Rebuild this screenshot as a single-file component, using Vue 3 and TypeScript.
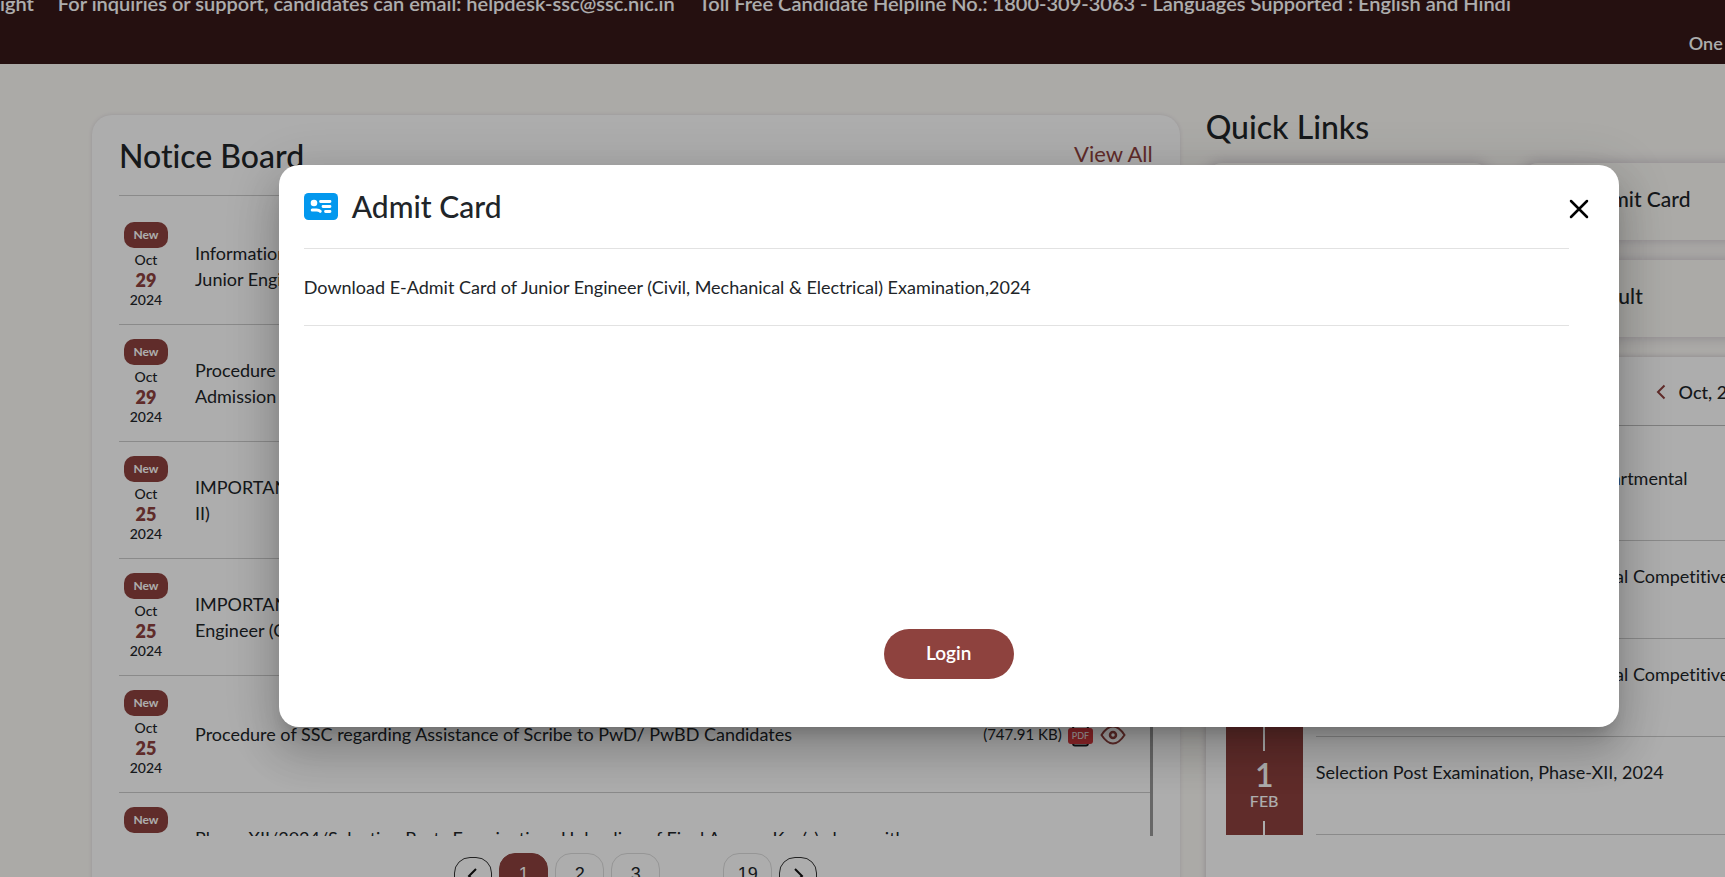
<script setup lang="ts">
interface Notice {
  month: string
  day: string
  year: string
  lines: string[]
  size?: string
}

interface ExamDate {
  day: string
  month: string
  title: string
}

const notices: Notice[] = [
  { month: 'Oct', day: '29', year: '2024', lines: ['Information', 'Junior Engineer'] },
  { month: 'Oct', day: '29', year: '2024', lines: ['Procedure for', 'Admission'] },
  { month: 'Oct', day: '25', year: '2024', lines: ['IMPORTANT', 'II)'] },
  { month: 'Oct', day: '25', year: '2024', lines: ['IMPORTANT', 'Engineer (Civil)'] },
  {
    month: 'Oct',
    day: '25',
    year: '2024',
    lines: ['Procedure of SSC regarding Assistance of Scribe to PwD/ PwBD Candidates'],
    size: '(747.91 KB)',
  },
  {
    month: 'Oct',
    day: '25',
    year: '2024',
    lines: ['Phase-XII/2024/Selection Posts Examination- Uploading of Final Answer Key(s) along with', 'Question Paper(s)'],
  },
]

const examDates: ExamDate[] = [
  { day: '1', month: 'FEB', title: 'Grade ‘C’ Stenographers, Limited Departmental' },
  { day: '1', month: 'FEB', title: 'SSA/ UDC Grade Limited Departmental Competitive' },
  { day: '1', month: 'FEB', title: 'SSA/ UDC Grade Limited Departmental Competitive' },
  { day: '1', month: 'FEB', title: 'Selection Post Examination, Phase-XII, 2024' },
]
</script>

<template>
  <div class="viewport">
    <div class="page">
      <header class="top">
        <div class="ticker">
          <span>ight</span>
          <span>For inquiries or support, candidates can email: helpdesk-ssc@ssc.nic.in</span>
          <span>Toll Free Candidate Helpline No.: 1800-309-3063 - Languages Supported : English and Hindi</span>
        </div>
        <div class="ticker second">One</div>
      </header>

      <main class="main">
        <section class="board">
          <div class="board-head">
            <h2>Notice Board</h2>
            <a href="#" class="view-all">View All</a>
          </div>
          <ul class="list">
            <li v-for="(n, i) in notices" :key="i" class="notice">
              <div class="date">
                <span class="badge">New</span>
                <span>{{ n.month }}</span>
                <strong>{{ n.day }}</strong>
                <span>{{ n.year }}</span>
              </div>
              <div class="notice-text">
                <div v-for="line in n.lines" :key="line">{{ line }}</div>
              </div>
              <div v-if="n.size" class="file">
                <span>{{ n.size }}</span>
                <svg width="26" height="26" viewBox="0 0 26 26">
                  <path d="M5 10V7Q5 5 7 5H18Q20 5 20 7V10M5 20V22.500Q5 24.500 7 24.500H18Q20 24.500 20 22.500V20" fill="none" stroke="#16181c" stroke-width="1.800" />
                  <rect x="0" y="7" width="25" height="16" rx="3" fill="#d63a3e" />
                  <text x="12.500" y="18" text-anchor="middle" class="pdf">PDF</text>
                </svg>
                <svg width="26" height="26" viewBox="0 0 26 26" fill="none" stroke="#8e423e" stroke-width="2">
                  <path d="M1.500 14Q7 5.500 13 5.500T24.500 14Q19 22.500 13 22.500T1.500 14Z" />
                  <circle cx="13" cy="14" r="3" stroke-width="2.500" />
                </svg>
              </div>
            </li>
          </ul>
          <nav class="pages">
            <button class="arrow" aria-label="Previous">
              <svg width="20" height="20" viewBox="0 0 20 20"><path d="M13 3L6 10L13 17" /></svg>
            </button>
            <button class="num active">1</button>
            <button class="num">2</button>
            <button class="num">3</button>
            <span class="gap"></span>
            <button class="num">19</button>
            <button class="arrow" aria-label="Next">
              <svg width="20" height="20" viewBox="0 0 20 20"><path d="M7 3L14 10L7 17" /></svg>
            </button>
          </nav>
        </section>

        <aside class="side">
          <h2>Quick Links</h2>
          <div class="links">
            <a href="#" class="link" aria-label="Apply"></a>
            <a href="#" class="link">Admit Card</a>
            <a href="#" class="link" aria-label="Answer key"></a>
            <a href="#" class="link">Result</a>
          </div>
          <section class="calendar">
            <div class="cal-head">
              <button class="prev" aria-label="Previous month">
                <svg width="12" height="16" viewBox="0 0 12 16"><path d="M9.500 1.500L3 8L9.500 14.500" /></svg>
              </button>
              <span>Oct, 2024</span>
            </div>
            <ul class="exams">
              <li v-for="(e, i) in examDates" :key="i" class="exam">
                <div class="exam-date">
                  <i></i>
                  <b>{{ e.day }}</b>
                  <span>{{ e.month }}</span>
                  <i></i>
                </div>
                <div class="exam-title">{{ e.title }}</div>
              </li>
            </ul>
          </section>
        </aside>
      </main>

      <div class="backdrop">
        <div class="modal" role="dialog" aria-labelledby="modal-title">
          <div class="modal-head">
            <svg width="34" height="27" viewBox="0 0 34 27">
              <rect width="34" height="27" rx="4.500" fill="#0398ee" />
              <circle cx="10" cy="10" r="3.300" fill="#fff" />
              <path d="M8.200 17H12.500Q15 17 16.200 18.300" fill="none" stroke="#fff" stroke-width="3" stroke-linecap="round" />
              <path d="M16.500 8.500H26M19 13.500H26M21.500 18.500H26" stroke="#fff" stroke-width="2.800" stroke-linecap="round" />
            </svg>
            <h1 id="modal-title">Admit Card</h1>
            <button class="close" aria-label="Close">
              <svg width="20" height="20" viewBox="0 0 20 20"><path d="M2 2L18 18M18 2L2 18" stroke-width="2.500" /></svg>
            </button>
          </div>
          <p class="entry">Download E-Admit Card of Junior Engineer (Civil, Mechanical &amp; Electrical) Examination,2024</p>
          <div class="actions">
            <button class="login">Login</button>
          </div>
        </div>
      </div>
    </div>
  </div>
</template>

<style>
body {
  margin: 0;
  background: #fdfbf7;
}
</style>

<style scoped>
* {
  box-sizing: border-box;
}
.viewport {
  height: 100vh;
  overflow: hidden;
  font-family: Lato, "Open Sans", sans-serif;
  font-size: 18px;
  line-height: 26px;
  font-variant-ligatures: none;
  color: #212529;
}
.page {
  position: relative;
  width: 110vw;
  height: 100%;
  overflow: hidden;
}
h1,
h2,
p,
ul {
  margin: 0;
  padding: 0;
  list-style: none;
}
button {
  font: inherit;
  padding: 0;
  cursor: pointer;
}
.top {
  height: 64px;
  overflow: hidden;
  background: #371918;
  color: #fff;
  font-weight: 600;
  display: flex;
  flex-direction: column;
  justify-content: flex-end;
  gap: 14px;
  padding-bottom: 8px;
}
.ticker {
  display: flex;
  flex-shrink: 0;
  gap: 24px;
  font-size: 20px;
  white-space: nowrap;
}
.second {
  padding-left: 89%;
  font-size: 18px;
}
.main {
  display: grid;
  grid-template-columns: 1088fr 600fr;
  gap: 26px;
  padding: 0 92px;
}
h2 {
  font-size: 32px;
  line-height: 38px;
  font-weight: 500;
}
.board {
  margin-top: 51px;
  padding: 22px 27px 24px;
  background: #fff;
  border-radius: 20px;
  box-shadow: 0 0 4px rgba(60, 50, 100, 0.15);
}
.board-head {
  display: flex;
  justify-content: space-between;
  height: 59px;
  border-bottom: 1px solid #ccc;
}
.view-all {
  font-size: 22px;
  line-height: 34px;
  color: #8e423e;
  text-decoration: none;
}
.list {
  height: 640px;
  overflow: hidden;
  padding-top: 12px;
  border-right: 3px solid #999;
}
.notice {
  display: flex;
  align-items: center;
  height: 117px;
  border-bottom: 1px solid #ccc;
}
.date {
  display: flex;
  flex-direction: column;
  align-items: center;
  width: 54px;
  margin-right: 22px;
  font-size: 14px;
  line-height: 20px;
  font-weight: 500;
}
.date strong {
  font-size: 18px;
  font-weight: 800;
  color: #8e423e;
}
.badge {
  width: 44px;
  border-radius: 10px;
  margin-bottom: 2px;
  background: #8e423e;
  color: #fff;
  font-size: 12px;
  line-height: 26px;
  font-weight: 700;
  text-align: center;
}
.notice-text {
  flex: 1;
  white-space: nowrap;
}
.file {
  display: flex;
  align-items: center;
  gap: 6px;
  margin-right: 24px;
  font-size: 15px;
}
.pdf {
  fill: #fff;
  font-size: 9px;
}
.pages {
  display: flex;
  justify-content: center;
  align-items: center;
  gap: 7px;
  margin-top: 17px;
}
.num,
.arrow {
  background: #fff;
  border: 1px solid #ddd;
  border-radius: 16px;
  color: #212529;
}
.num {
  width: 49px;
  height: 46px;
  padding-bottom: 4px;
  font-family: "Liberation Sans", Arial, sans-serif;
}
.active {
  border-color: #8e423e;
  background: #8e423e;
  color: #fff;
}
.arrow {
  display: grid;
  place-items: center;
  width: 38px;
  height: 38px;
  border-color: #333;
}
.arrow path {
  fill: none;
  stroke: #111;
  stroke-width: 2;
}
.gap {
  width: 49px;
}
.side {
  padding-top: 44px;
}
.links {
  display: grid;
  grid-template-columns: 1fr 1fr;
  gap: 20px 32px;
  margin-top: 17px;
}
.link {
  height: 77px;
  padding-left: 64px;
  border-radius: 16px;
  background: #fdfbf7;
  box-shadow: 0 0 14px rgba(60, 40, 80, 0.25);
  color: #212529;
  font-size: 21px;
  line-height: 72px;
  font-weight: 500;
  text-decoration: none;
}
.calendar {
  margin-top: 20px;
  height: 600px;
  border-radius: 20px;
  background: #fff;
  box-shadow: 0 0 6px rgba(60, 40, 80, 0.25);
  padding: 0 20px;
}
.cal-head {
  display: flex;
  justify-content: flex-end;
  align-items: center;
  gap: 12px;
  height: 69px;
  padding: 2px 27px 0 0;
  border-bottom: 1px solid #bbb;
  font-weight: 500;
}
.prev {
  display: grid;
  background: none;
  border: 0;
}
.prev path {
  fill: none;
  stroke: #8e423e;
  stroke-width: 2;
}
.exams {
  padding-top: 17px;
}
.exam {
  display: flex;
  gap: 13px;
  height: 98px;
}
.exam-date {
  display: flex;
  flex-direction: column;
  align-items: center;
  width: 77px;
  background: #8e423e;
  color: #fff;
  font-size: 16px;
  line-height: 20px;
  font-weight: 500;
}
.exam-date b {
  font-size: 32px;
  line-height: 32px;
  font-weight: 600;
  margin-top: 8px;
}
.exam-date i {
  width: 2px;
  flex: 1;
  background: #fff;
}
.exam-date span {
  margin-bottom: 10px;
}
.exam-title {
  flex: 1;
  padding-top: 22px;
  border-bottom: 1px solid #ccc;
  white-space: nowrap;
}
.backdrop {
  position: absolute;
  inset: 0;
  display: flex;
  justify-content: center;
  align-items: flex-start;
  padding-top: 165px;
  background: rgba(0, 0, 0, 0.32);
}
.modal {
  display: flex;
  flex-direction: column;
  width: 1340px;
  min-height: 562px;
  padding: 0 50px 48px 25px;
  background: #fff;
  border-radius: 20px;
  box-shadow: 0 12px 16px -8px rgba(0, 0, 0, 0.2), 0 26px 42px 3px rgba(0, 0, 0, 0.14),
    0 10px 50px 9px rgba(0, 0, 0, 0.12);
}
.modal-head {
  display: flex;
  align-items: center;
  height: 84px;
  border-bottom: 1px solid #e2e2e2;
}
h1 {
  margin: 0 0 2px 14px;
  font-size: 30px;
  line-height: 36px;
  font-weight: 500;
}
.close {
  display: grid;
  margin: 4px -20px 0 auto;
  background: none;
  border: 0;
}
.close path {
  stroke: #000;
  stroke-linecap: round;
}
.entry {
  padding: 25px 0;
  border-bottom: 1px solid #e2e2e2;
}
.actions {
  display: flex;
  justify-content: center;
  margin: auto -50px 0 -25px;
}
.login {
  width: 130px;
  height: 50px;
  padding-bottom: 2px;
  border: 0;
  border-radius: 25px;
  background: #8e423e;
  color: #fff;
  font-size: 19px;
  font-weight: 600;
}
</style>
